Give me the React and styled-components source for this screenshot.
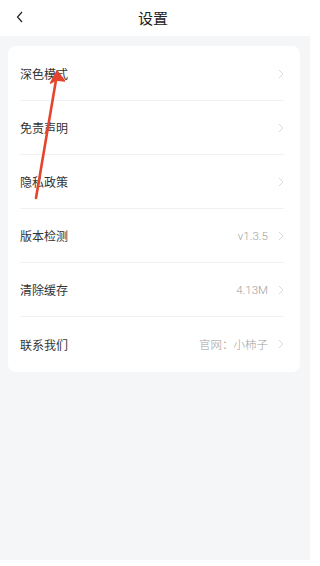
import styled, { createGlobalStyle } from 'styled-components'

const GlobalStyle = createGlobalStyle`
	html, body {
		margin: 0;
		padding: 0;
		background: #fff;
	}
	body {
		font-family: 'Noto Sans CJK SC', 'Noto Sans', sans-serif;
		color: #333;
	}
`

const Page = styled.div`
	position: relative;
	width: 310px;
	height: 560px;
	background: #f5f6f8;
	display: flex;
	flex-direction: column;
`

const Header = styled.header`
	height: 36px;
	background: #fff;
	display: flex;
	align-items: center;
	justify-content: center;
	position: relative;
	flex-shrink: 0;
`

const BackButton = styled.button`
	position: absolute;
	left: 10px;
	top: 7px;
	width: 20px;
	height: 20px;
	border: 0;
	padding: 0;
	background: none;
	display: flex;
	align-items: center;
	justify-content: center;
`

const Title = styled.h1`
	margin: 0 4px 0 0;
	font-size: 15px;
	font-weight: 400;
	color: #222;
	line-height: 1;
	margin-top: -2px;
`

const Card = styled.ul`
	list-style: none;
	margin: 10px 10px 0 8px;
	padding: 1px 16px 1px 12px;
	background: #fff;
	border-radius: 8px;
`

const Row = styled.li`
	height: 54px;
	display: flex;
	align-items: center;
	box-sizing: border-box;
	border-bottom: ${(p) => (p.last ? 'none' : '1px solid #f1f2f4')};
`

const Label = styled.span`
	flex: 1;
	font-size: 12px;
	color: #333;
`

const Value = styled.span`
	font-family: Roboto, 'Noto Sans CJK SC', sans-serif;
	font-weight: 300;
	font-size: 11.5px;
	color: #a0a0a0;
	margin-right: 10px;
`

const Arrow = styled.svg`
	position: absolute;
	left: 0;
	top: 0;
	pointer-events: none;
`

const Chevron = () => (
	<svg width='6' height='10' viewBox='0 0 6 10'>
		<path d='M1 1 L5 5 L1 9' fill='none' stroke='#d8d8d8' strokeWidth='1' />
	</svg>
)

const items = [
	{ label: '深色模式' },
	{ label: '免责声明' },
	{ label: '隐私政策' },
	{ label: '版本检测', value: 'v1.3.5' },
	{ label: '清除缓存', value: '4.13M' },
	{ label: '联系我们', value: '官网：小柿子' },
]

export default function App() {
	return (
		<>
			<GlobalStyle />
			<Page>
				<Header>
					<BackButton>
						<svg width='8' height='12' viewBox='0 0 8 12'>
							<path d='M6 1 L1.5 6 L6 11' fill='none' stroke='#222' strokeWidth='1.2' />
						</svg>
					</BackButton>
					<Title>设置</Title>
				</Header>
				<Card>
					{items.map((item, index) => (
						<Row key={index} last={index === items.length - 1}>
							<Label>{item.label}</Label>
							{item.value && <Value>{item.value}</Value>}
							<Chevron />
						</Row>
					))}
				</Card>
				{/* red annotation arrow */}
				<Arrow width='310' height='560' viewBox='0 0 310 560'>
					<line x1='36' y1='198' x2='56' y2='80' stroke='#e5442d' strokeWidth='2.6' strokeLinecap='round' />
					<path d='M57 71 L50.5 83 L56 80 L64.5 81 Z' fill='#e5442d' stroke='#e5442d' strokeWidth='1.5' strokeLinejoin='round' />
				</Arrow>
			</Page>
		</>
	)
}
